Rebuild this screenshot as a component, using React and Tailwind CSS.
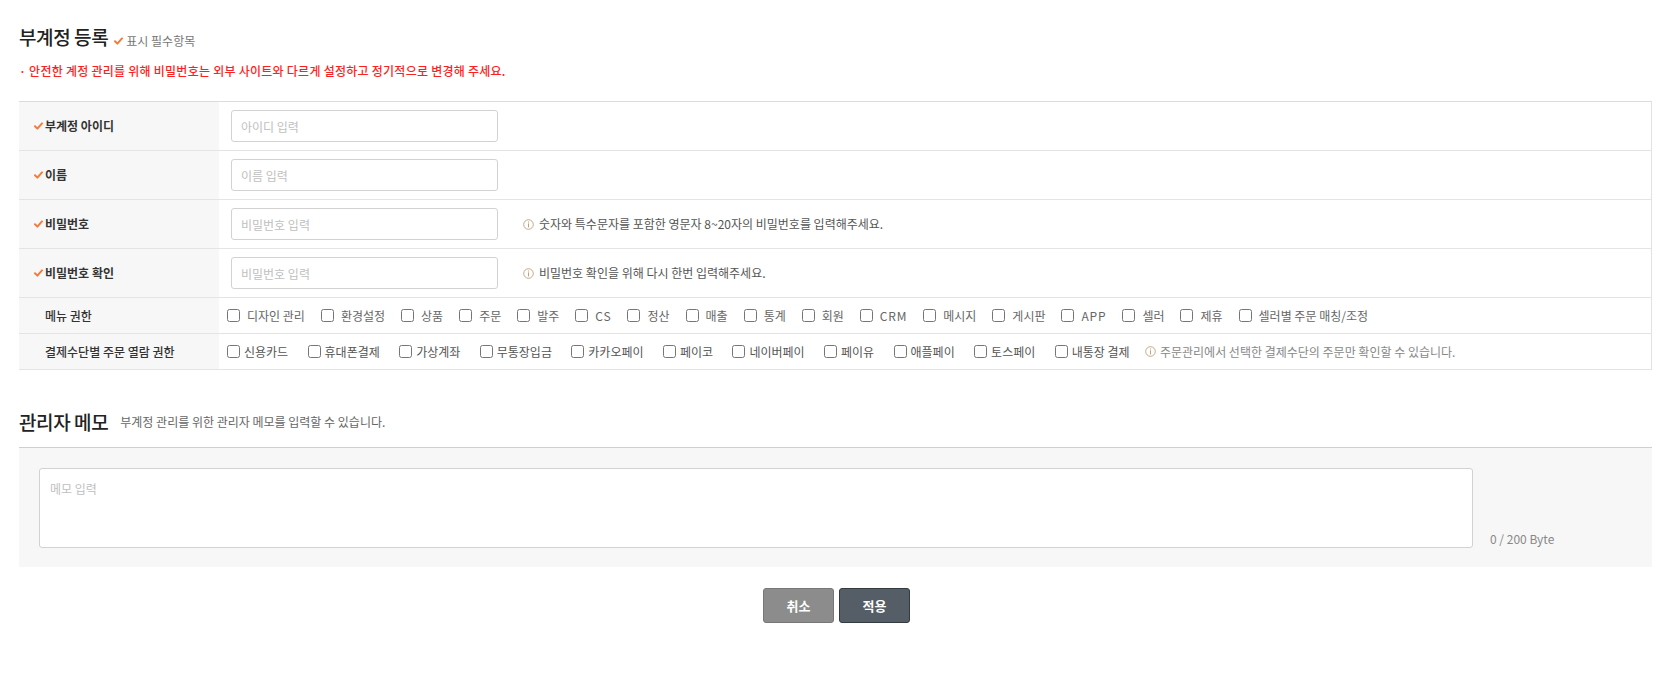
import React from "react";

const FONT = "font-['Noto_Sans_CJK_KR','Noto_Sans',sans-serif]";

function Check() {
  return (
    <svg width="9" height="8" viewBox="0 0 9 8" className="shrink-0">
      <path d="M1 4.2 L3.4 6.6 L8 1.4" fill="none" stroke="#f47b3b" strokeWidth="2" strokeLinecap="round" strokeLinejoin="round" />
    </svg>
  );
}

function Info() {
  return (
    <svg width="11" height="11" viewBox="0 0 11 11" className="shrink-0">
      <circle cx="5.5" cy="5.5" r="4.8" fill="none" stroke="#bfa07a" strokeWidth="0.9" />
      <rect x="5" y="2.5" width="1" height="1" fill="#bfa07a" />
      <rect x="5" y="4.4" width="1" height="4" fill="#bfa07a" />
    </svg>
  );
}

function Label({ required, children }) {
  return (
    <div className="w-[200px] shrink-0 bg-[#f7f7f7] flex items-center pl-[15px]">
      <span className="w-[11px] flex">{required ? <Check /> : null}</span>
      <span className={`text-[12px] text-[#333] ${required ? "font-bold" : "font-medium"}`}>{children}</span>
    </div>
  );
}

function InputRow({ label, placeholder, help, type = "text" }) {
  return (
    <div className="flex h-[49px] border-b border-[#e4e4e4]">
      <Label required>{label}</Label>
      <div className="flex items-center pl-[12px] gap-[25px]">
        <input
          type={type}
          placeholder={placeholder}
          className="w-[267px] h-[32px] border border-[#d2d2d2] rounded-[3px] px-[9px] text-[12px] text-[#333] placeholder:text-[#c0c0c0] bg-white outline-none"
        />
        {help ? (
          <div className="flex items-center gap-[5px] text-[12px] text-[#555]">
            <Info />
            <span>{help}</span>
          </div>
        ) : null}
      </div>
    </div>
  );
}

const menuItems = [
  "디자인 관리", "환경설정", "상품", "주문", "발주", "CS", "정산", "매출", "통계",
  "회원", "CRM", "메시지", "게시판", "APP", "셀러", "제휴", "셀러별 주문 매칭/조정",
];

const payItems = [
  "신용카드", "휴대폰결제", "가상계좌", "무통장입금", "카카오페이", "페이코",
  "네이버페이", "페이유", "애플페이", "토스페이", "내통장 결제",
];

// Latin-only menu names get a touch of spacing so they sit like the hangul ones
const isLatin = (s) => /^[A-Z]+$/.test(s);

export default function App() {
  return (
    <div className={`${FONT} bg-white min-h-[674px] pl-[19px] pr-[17px] pt-[23px] text-[#333]`}>
      {/* page heading */}
      <div className="flex items-baseline h-[28px]">
        <h1 className="text-[19px] leading-[28px] tracking-[-0.4px] font-medium text-[#222]">부계정 등록</h1>
        <span className="ml-[6px] flex items-center gap-[3px] text-[12px] text-[#777]">
          <Check />
          표시 필수항목
        </span>
      </div>
      <p className="mt-[11px] h-[18px] leading-[18px] text-[12px] tracking-[0.25px] font-medium text-[#ff1e1e]">
        · 안전한 계정 관리를 위해 비밀번호는 외부 사이트와 다르게 설정하고 정기적으로 변경해 주세요.
      </p>

      {/* account form */}
      <div className="mt-[21px] border-t border-[#dcdcdc] border-r border-r-[#e2e2e2]">
        <InputRow label="부계정 아이디" placeholder="아이디 입력" />
        <InputRow label="이름" placeholder="이름 입력" />
        <InputRow
          label="비밀번호"
          placeholder="비밀번호 입력"
          type="password"
          help="숫자와 특수문자를 포함한 영문자 8~20자의 비밀번호를 입력해주세요."
        />
        <InputRow
          label="비밀번호 확인"
          placeholder="비밀번호 입력"
          type="password"
          help="비밀번호 확인을 위해 다시 한번 입력해주세요."
        />

        <div className="flex h-[36px] border-b border-[#e4e4e4]">
          <Label>메뉴 권한</Label>
          <div className="flex items-center pl-[8px] gap-[16px]">
            {menuItems.map((m) => (
              <label key={m} className="flex items-center gap-[7px] text-[12px] text-[#666]">
                <input type="checkbox" className="m-0 w-[13px] h-[13px]" />
                <span className={isLatin(m) ? "tracking-[0.8px]" : ""}>{m}</span>
              </label>
            ))}
          </div>
        </div>

        <div className="flex h-[36px] border-b border-[#e4e4e4]">
          <Label>결제수단별 주문 열람 권한</Label>
          <div className="flex items-center pl-[8px] gap-[19.4px]">
            {payItems.map((m) => (
              <label key={m} className="flex items-center gap-[4px] text-[12px] text-[#555]">
                <input type="checkbox" className="m-0 w-[13px] h-[13px]" />
                <span>{m}</span>
              </label>
            ))}
            <div className="-ml-[4px] flex items-center gap-[4px] text-[12px] text-[#888]">
              <Info />
              <span>주문관리에서 선택한 결제수단의 주문만 확인할 수 있습니다.</span>
            </div>
          </div>
        </div>
      </div>

      {/* admin memo */}
      <div className="mt-[38px] h-[40px] border-b border-[#cfcfcf] flex items-start">
        <h2 className="text-[19px] leading-[28px] tracking-[-0.4px] font-medium text-[#222]">관리자 메모</h2>
        <span className="ml-[12px] leading-[28px] text-[12px] text-[#666]">
          부계정 관리를 위한 관리자 메모를 입력할 수 있습니다.
        </span>
      </div>
      <div className="bg-[#f7f7f7] flex pl-[20px] pt-[20px] pb-[19px]">
        <textarea
          placeholder="메모 입력"
          className="flex-1 h-[80px] resize-none bg-white border border-[#d2d2d2] rounded-[3px] p-[10px] text-[12px] leading-[20px] placeholder:text-[#c0c0c0] outline-none"
        />
        <div className="w-[179px] pl-[17px] flex items-end pb-[1px]">
          <span className="text-[12px] leading-[16px] text-[#888]">0 / 200 Byte</span>
        </div>
      </div>

      {/* actions */}
      <div className="mt-[21px] flex justify-center gap-[5px] pl-[2px]">
        <button className="w-[71px] h-[35px] rounded-[3px] bg-[#8c8c8c] border border-[#777] text-white text-[13px] font-bold">
          취소
        </button>
        <button className="w-[71px] h-[35px] rounded-[3px] bg-[#555e66] border border-[#333a40] text-white text-[13px] font-bold">
          적용
        </button>
      </div>
    </div>
  );
}
